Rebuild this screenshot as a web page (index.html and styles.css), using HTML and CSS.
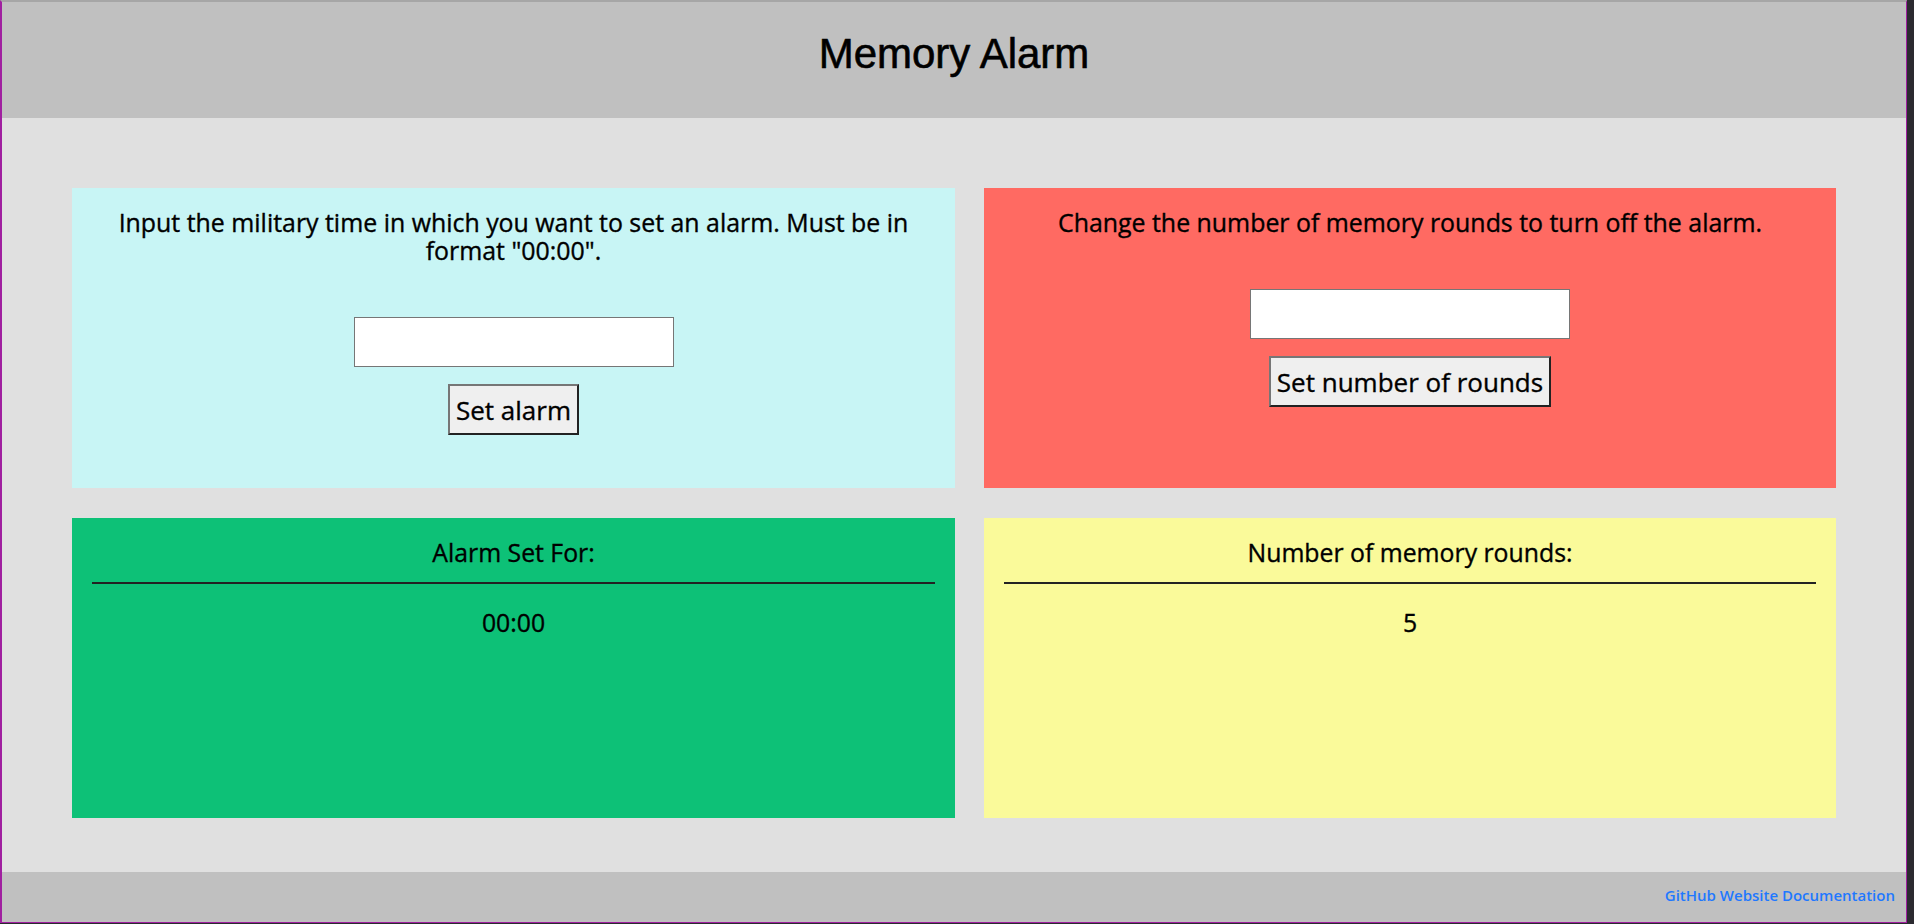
FILE: index.html
```
<!DOCTYPE html>
<html lang="en">
<head>
    <meta charset="UTF-8">
    <meta name="viewport" content="width=device-width, initial-scale=1.0">
    <title>Memory Alarm</title>
    <link rel="stylesheet" href="styles.css">
</head>
<body>
    <div class="window">
        <header class="top-bar">
            <h1>Memory Alarm</h1>
        </header>

        <main class="board">
            <section class="panel panel-time">
                <p class="prompt">Input the military time in which you want to set an alarm. Must be in format "00:00".</p>
                <input type="text" id="alarmTime">
                <button id="setAlarm">Set alarm</button>
            </section>

            <section class="panel panel-rounds">
                <p class="prompt">Change the number of memory rounds to turn off the alarm.</p>
                <input type="text" id="roundCount">
                <button id="setRounds">Set number of rounds</button>
            </section>

            <section class="panel panel-alarm">
                <h2 class="readout-title">Alarm Set For:</h2>
                <hr>
                <p class="readout-value" id="alarmValue">00:00</p>
            </section>

            <section class="panel panel-count">
                <h2 class="readout-title">Number of memory rounds:</h2>
                <hr>
                <p class="readout-value" id="roundValue">5</p>
            </section>
        </main>

        <footer class="bottom-bar">
            <a href="#">GitHub Website Documentation</a>
        </footer>
    </div>
</body>
</html>
```

FILE: styles.css
```
body {
    margin: 0;
    background-color: #2b2a30;
    font-family: "Open Sans", "Noto Sans", sans-serif;
    color: #000;
}
.window {
    width: 1904px;
    height: 920px;
    border-top: 2px solid #a6a6a6;
    border-left: 2px solid #a020a0;
    border-right: 1px solid #a020a0;
    border-bottom: 1px solid #a020a0;
    display: flex;
    flex-direction: column;
    background-color: #e0e0e0;
}
.top-bar {
    height: 116px;
    background-color: #c0c0c0;
    display: flex;
    align-items: center;
    justify-content: center;
}
.top-bar h1 {
    margin: 0 0 12px 0;
    font-family: "Liberation Sans", Arial, sans-serif;
    font-weight: normal;
    font-size: 42px;
    -webkit-text-stroke: 0.6px #000;
}
.board {
    flex: 1;
    padding: 70px 70px 54px 70px;
    display: grid;
    grid-template-columns: 883fr 852fr;
    grid-template-rows: 300px 300px;
    column-gap: 29px;
    row-gap: 30px;
}
.panel {
    display: flex;
    flex-direction: column;
    align-items: center;
    text-align: center;
    padding: 20px 20px 0 20px;
}
.panel-time {
    background-color: #c8f5f5;
}
.panel-rounds {
    background-color: #ff6a62;
}
.panel-alarm {
    background-color: #0dc177;
}
.panel-count {
    background-color: #fafa9a;
}
.prompt {
    margin: 0;
    font-size: 24.9px;
    line-height: 28px;
    -webkit-text-stroke: 0.35px #000;
}
.panel input {
    margin-top: 53px;
    width: 320px;
    height: 50px;
    box-sizing: border-box;
    border: 1px solid #767676;
    background-color: #fff;
}
.panel button {
    margin-top: 17px;
    height: 51px;
    padding: 0 6px;
    font-family: "Open Sans", "Noto Sans", sans-serif;
    font-size: 26px;
    color: #000;
    background-color: #efefef;
    border-style: solid;
    border-width: 2px;
    border-color: #767676 #222 #222 #767676;
    -webkit-text-stroke: 0.35px #000;
}
.readout-title {
    margin: -1px 0 0 0;
    font-size: 24.8px;
    font-weight: normal;
    line-height: 30px;
    -webkit-text-stroke: 0.35px #000;
}
.panel hr {
    align-self: stretch;
    margin: 15px 0 0 0;
    border: none;
    height: 2px;
    background-color: #222;
}
.readout-value {
    margin: 23px 0 0 0;
    font-size: 24.8px;
    line-height: 30px;
    -webkit-text-stroke: 0.35px #000;
}
.bottom-bar {
    height: 50px;
    background-color: #c0c0c0;
    display: flex;
    align-items: center;
    justify-content: flex-end;
    padding-right: 11px;
}
.bottom-bar a {
    color: #1f78ff;
    text-decoration: none;
    font-size: 15px;
    font-weight: 600;
    margin-top: -4px;
}
```
